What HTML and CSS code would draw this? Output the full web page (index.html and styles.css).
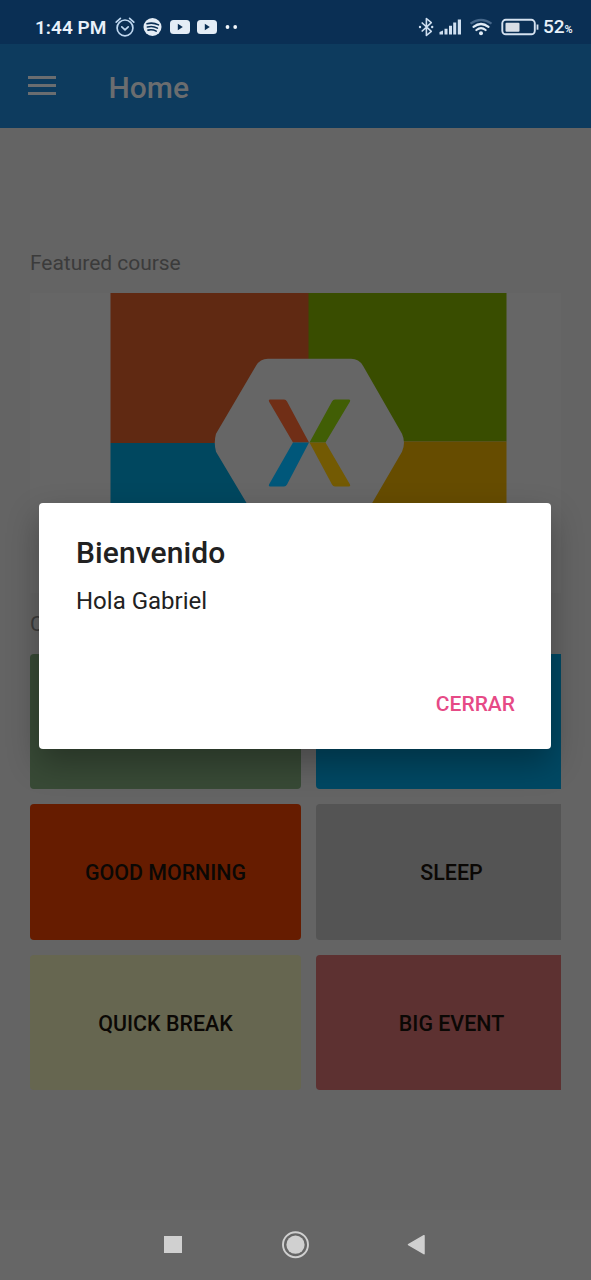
FILE: index.html
```html
<!DOCTYPE html>
<html lang="es">
<head>
<meta charset="utf-8">
<title>Home</title>
<link rel="stylesheet" href="styles.css">
</head>
<body>
<div class="screen">
  <header class="status">
    <span class="clock">1:44 PM</span>
    <svg class="status-left" width="126" height="24" viewBox="0 0 126 24" fill="none">
      <g stroke="#bfd8f0" stroke-width="1.7" stroke-linecap="round" stroke-linejoin="round">
        <circle cx="11" cy="12.900" r="7.900"/>
        <path d="M7.800 11.900l3.200 2.900 3.200-2.900M2.200 7.200l4.200-3.800M19.800 7.200l-4.200-3.800"/>
      </g>
      <circle cx="38.500" cy="12" r="9" fill="#e4edf6"/>
      <path d="M33 8.700q6-1.600 11.500 1.200M33.400 12q5.500-1.400 10 1.100M34 15.100q4.400-1.100 8.200 1" stroke="#0a2f54" stroke-width="1.600" stroke-linecap="round"/>
      <rect x="56" y="5" width="20" height="14" rx="3.500" fill="#e4edf6"/>
      <path d="M63.800 8.700v6.600l5-3.300z" fill="#0a2f54"/>
      <rect x="83" y="5" width="20" height="14" rx="3.500" fill="#e4edf6"/>
      <path d="M90.800 8.700v6.600l5-3.300z" fill="#0a2f54"/>
      <circle cx="113.500" cy="12" r="1.900" fill="#f2f6fa"/>
      <circle cx="121.200" cy="12" r="1.900" fill="#f2f6fa"/>
    </svg>
    <svg class="status-right" width="124" height="24" viewBox="0 0 124 24" fill="none">
      <path d="M3.700 7.500l9.600 8.800-4.900 4.200V3.500l4.900 4.200-9.600 8.800" stroke="#cfdff0" stroke-width="1.600" stroke-linejoin="round"/>
      <circle cx="2" cy="12" r="1.200" fill="#cfdff0"/><circle cx="14.200" cy="12" r="1.200" fill="#cfdff0"/>
      <path d="M21.500 19.500v-2.600l3.500-1.400v4zM26.500 13.800h3v5.700h-3zM31 10.700h3v8.800h-3zM35.200 7.500h3v12h-3zM39.800 4.500h3.200v15h-3.200z" fill="#cfdff0"/>
      <path d="M52.500 8.700q10.500-7.600 21 0" stroke="#46678a" stroke-width="2.200"/>
      <path d="M55.500 11.900q7.500-5.800 15 0M58.400 15q4.600-3.600 9.200 0" stroke="#e0ebf6" stroke-width="2.200" stroke-linecap="round"/>
      <circle cx="63" cy="18.300" r="2" fill="#e0ebf6"/>
      <rect x="84.300" y="4.800" width="32.500" height="14.500" rx="3.500" stroke="#d5e2f0" stroke-width="1.900"/>
      <rect x="87.500" y="7.700" width="14" height="9" rx="1" fill="#d8dee6"/>
      <path d="M119.500 9.500v5.200" stroke="#d5e2f0" stroke-width="1.800"/>
    </svg>
    <span class="battery">52<small>%</small></span>
  </header>
  <nav class="appbar">
    <svg class="menu" width="28" height="20" viewBox="0 0 28 20"><path d="M0 0h28v3H0zM0 8h28v3H0zM0 16h28v3H0z" fill="#6a6d70"/></svg>
    <h1 class="title">Home</h1>
  </nav>
  <main class="content">
    <h2 class="label">Featured course</h2>
    <div class="card">
      <svg width="397" height="300" viewBox="0 0 397 300">
        <path fill="#602912" d="M.500 0H199v150H.500z"/>
        <path fill="#394d00" d="M198.500 0h198v148.500h-198z"/>
        <path fill="#00475f" d="M.500 150H199v150H.500z"/>
        <path fill="#664c00" d="M198.500 148.500h198V300h-198z"/>
        <path fill="#666" d="M158 65.800h83q8 0 12 7l39 68q4 9 0 18l-39 67q-4 7-12 7h-83q-8 0-12-7l-40-67q-2.500-9 0-18l40-68q4-7 12-7z"/>
        <path fill="#702e16" d="M160 106.500h14q2 0 3 2l22 41h-16l-24-41q-.800-2 1-2z"/>
        <path fill="#415e05" d="M239 106.500h-14q-2 0-3 2l-22.500 41h16l24.500-41q.800-2-1-2z"/>
        <path fill="#00577a" d="M160 193.500h14q2 0 3-2l22-42h-16l-24 42q-.800 2 1 2z"/>
        <path fill="#735a03" d="M239 193.500h-14q-2 0-3-2l-22.500-42h16l24.500 42q.800 2-1 2z"/>
      </svg>
    </div>
    <h2 class="label label-categories">C</h2>
    <div class="tiles">
      <div class="tile green"></div>
      <div class="tile blue"></div>
      <div class="tile orange">GOOD MORNING</div>
      <div class="tile gray">SLEEP</div>
      <div class="tile sand">QUICK BREAK</div>
      <div class="tile rose">BIG EVENT</div>
    </div>
  </main>
  <footer class="navbar">
    <svg width="591" height="70" viewBox="0 0 591 70">
      <path d="M164 26h18v17h-18z" fill="#d0d0d0"/>
      <circle cx="295.500" cy="34.700" r="12.500" fill="none" stroke="#d0d0d0" stroke-width="1.900"/>
      <circle cx="295.500" cy="34.700" r="9.100" fill="#d0d0d0"/>
      <path d="M408.500 34.700l15.500-9v18z" fill="#d0d0d0" stroke="#d0d0d0" stroke-width="1.500" stroke-linejoin="round"/>
    </svg>
  </footer>
  <div class="dialog" role="dialog">
    <h2 class="dialog-title">Bienvenido</h2>
    <p class="dialog-text">Hola Gabriel</p>
    <button class="dialog-action">CERRAR</button>
  </div>
</div>
</body>
</html>
```
FILE: styles.css
```css
* { box-sizing: border-box; }
body { margin: 0; font-family: Roboto, "Liberation Sans", sans-serif; }
h1, h2, p { margin: 0; }
svg { display: block; flex: none; }
.screen {
  position: relative;
  display: flex;
  flex-direction: column;
  width: 591px;
  height: 1280px;
  overflow: hidden;
  background: #646464;
}
.status {
  display: flex;
  align-items: center;
  height: 44px;
  padding: 10px 0 0 35px;
  background: #0a2f54;
  color: #e8f1fa;
  white-space: nowrap;
}
.clock { width: 72px; padding-top: 2px; font-size: 19px; font-weight: 600; line-height: 24px; }
.status-left { margin-left: 7px; }
.status-right { margin-left: 178px; }
.battery { display: flex; align-items: baseline; margin-left: 1px; padding-top: 2px; font-size: 19px; font-weight: 500; line-height: 24px; }
.battery small { font-size: 11px; font-weight: 600; letter-spacing: -.5px; }
.appbar {
  display: flex;
  align-items: center;
  height: 84px;
  padding-left: 28px;
  background: #0d3b5e;
}
.title { margin: 3px 0 0 52.500px; color: #6b6d6f; font-size: 30px; font-weight: 500; line-height: 36px; }
.content { flex: 1; padding: 120px 30px 0; }
.label { color: #3b3b3b; font-size: 21px; font-weight: 400; line-height: 30px; letter-spacing: -.030px; }
.card {
  display: flex;
  justify-content: center;
  height: 300px;
  margin-top: 15px;
  background: #666;
  overflow: hidden;
}
.card svg { position: relative; left: 13px; }
.label-categories { margin-top: 16px; }
.tiles {
  display: grid;
  grid-template-columns: 271px 271px;
  gap: 15px;
  margin-top: 15px;
  overflow: hidden;
}
.tile {
  display: flex;
  align-items: center;
  justify-content: center;
  height: 135.300px;
  padding-top: 2px;
  border-radius: 4px;
  color: #0b0805;
  font-size: 21.400px;
  font-weight: 500;
}
.green { background: #384a36; }
.blue { background: #004863; }
.orange { background: #661c00; }
.gray { background: #545454; }
.sand { background: #666650; }
.rose { background: #5d3131; }
.navbar { height: 70px; background: #666; }
.dialog {
  position: absolute;
  left: 39px;
  top: 503px;
  display: flex;
  flex-direction: column;
  width: 512px;
  height: 246px;
  padding: 32px 36px 30px 37px;
  border-radius: 4px;
  background: #fff;
  box-shadow: 0 14px 32px rgba(0, 0, 0, .3);
  color: #212121;
}
.dialog-title { font-size: 30px; font-weight: 500; line-height: 36px; letter-spacing: .1px; }
.dialog-text { margin-top: 15px; font-size: 24px; line-height: 30px; }
.dialog-action {
  align-self: flex-end;
  margin-top: auto;
  padding: 0;
  border: 0;
  background: none;
  color: #e64a86;
  font: 500 21px/30px Roboto, "Liberation Sans", sans-serif;
}
```
